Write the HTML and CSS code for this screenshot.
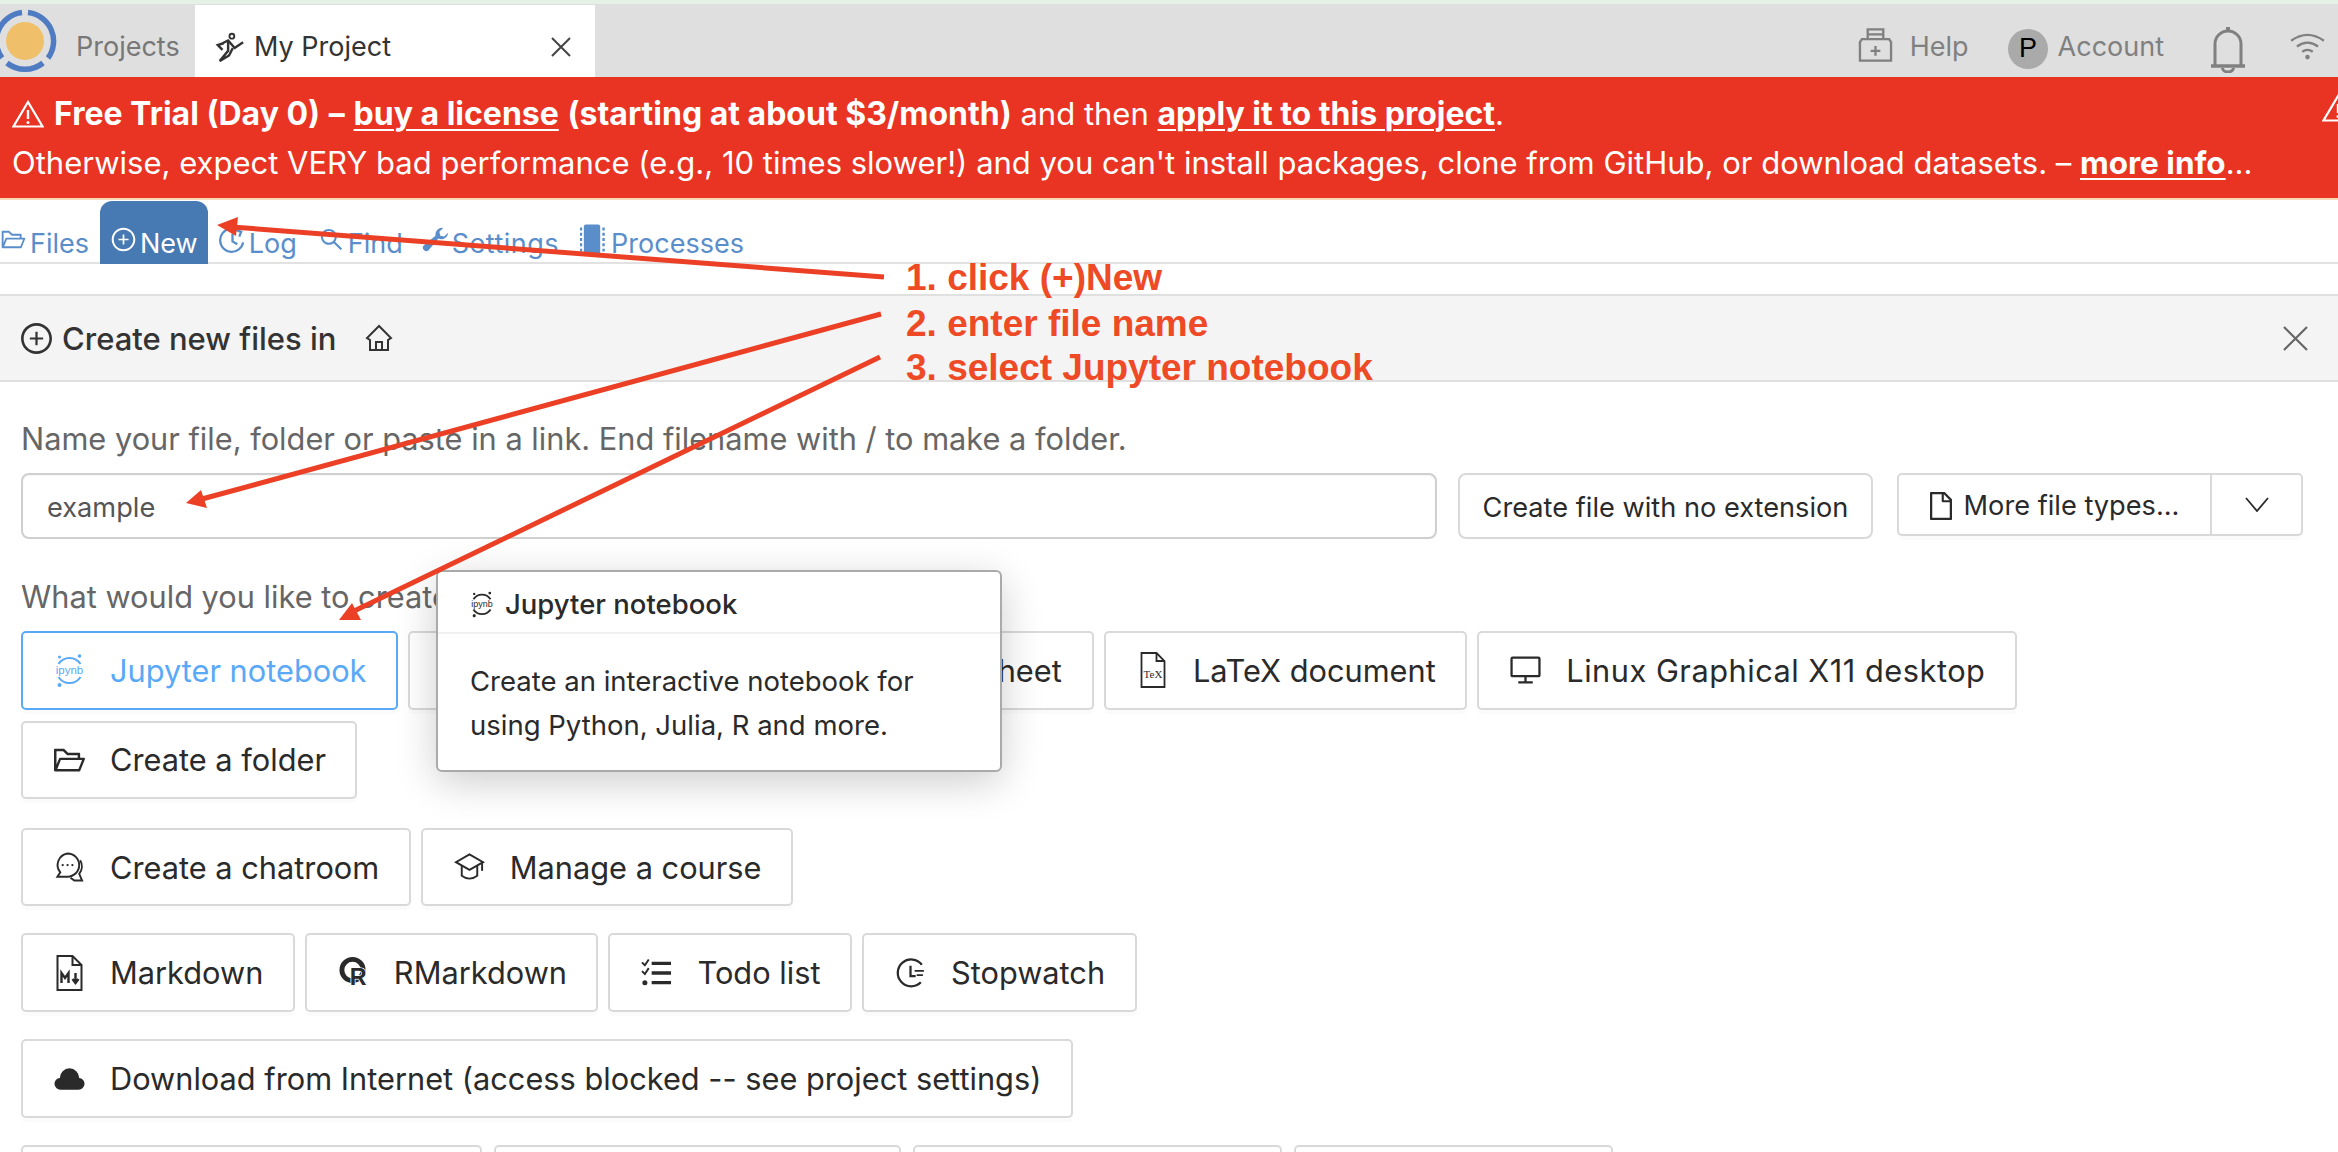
FILE: index.html
```html
<!DOCTYPE html>
<html lang="en">
<head>
<meta charset="utf-8">
<title>My Project</title>
<link rel="stylesheet" href="styles.css">
</head>
<body>
<div class="app">
  <div class="strip"></div>
  <header class="topbar">
    <svg class="logo" viewBox="0 0 64 64"><circle cx="32" cy="32" r="19" fill="#efc069"/><g fill="none" stroke="#4e7bc2" stroke-width="5.500"><path d="M35 3.600A28.600 28.600 0 0 1 55 49"/><path d="M50 54A28.600 28.600 0 0 1 14 54"/><path d="M9 49A28.600 28.600 0 0 1 29 3.600"/></g></svg>
    <span class="tab-projects">Projects</span>
    <div class="tab-active">
      <svg class="run" viewBox="0 0 32 32" fill="none" stroke="#333" stroke-width="2.600"><circle cx="18" cy="4.500" r="2.600" stroke-width="2"/><path d="M9 12l-6 2 5 5"/><path d="M8 12l6-3 7 8 9-6"/><path d="M14 9l0 11-9 11 10-6 4-8"/></svg>
      <span class="tab-title">My Project</span>
      <svg class="x tab-x" viewBox="0 0 20 20"><path d="M1 1l18 18M19 1L1 19"/></svg>
    </div>
    <div class="top-right">
      <svg class="medkit" viewBox="0 0 36 36" fill="none" stroke="#808080" stroke-width="2.400"><path d="M4 12h28l2 3v19H2V15z"/><path d="M10 12V2h16v10M10 7h16"/><path d="M18 19v10M13 24h10"/></svg>
      <span class="top-label help">Help</span>
      <span class="avatar">P</span>
      <span class="top-label account">Account</span>
      <svg class="bell" viewBox="0 0 36 48" fill="none" stroke="#808080" stroke-width="3"><path d="M5 40V19a13 13 0 0 1 26 0v21"/><path d="M1 41h34" stroke-width="3.600"/><path d="M18 2v4" stroke-width="4"/><path d="M12.500 43a5.500 4 0 0 0 11 0"/></svg>
      <svg class="wifi" viewBox="0 0 36 28" fill="none" stroke="#808080" stroke-width="2.400"><path d="M1 8q17-12 34 0"/><path d="M7 14q11-8 22 0"/><path d="M12.500 19.500q5.500-4 11 0"/><circle cx="18" cy="25" r="2.400" fill="#808080" stroke="none"/></svg>
    </div>
  </header>

  <section class="banner">
    <div class="banner-line banner-first"><svg class="warn" viewBox="0 0 32 28" fill="none" stroke="#fff" stroke-width="2.200"><path d="M16 2L1.500 26.500h29z"/><path d="M16 10v9" stroke-width="2.400"/><circle cx="16" cy="22.500" r="1.500" fill="#fff" stroke="none"/></svg><strong>Free Trial (Day 0)</strong> <strong>–</strong> <a class="link">buy a license</a> <strong>(starting at about $3/month)</strong> and then <a class="link">apply it to this project</a>.</div>
    <div class="banner-line">Otherwise, expect VERY bad performance (e.g., 10 times slower!) and you can't install packages, clone from GitHub, or download datasets. – <a class="link">more info</a>...</div>
    <svg class="warn warn-right" viewBox="0 0 32 28" fill="none" stroke="#fff" stroke-width="2.200"><path d="M16 2L1.500 26.500h29z"/><path d="M16 10v9" stroke-width="2.400"/><circle cx="16" cy="22.500" r="1.500" fill="#fff" stroke="none"/></svg>
  </section>

  <nav class="nav">
    <a class="nav-item"><svg class="ic nav-ic" viewBox="0 0 1024 1024"><path d="M928 444H820V330.400c0-17.700-14.300-32-32-32H473L355.700 186.200a8.150 8.150 0 00-5.500-2.200H96c-17.700 0-32 14.300-32 32v592c0 17.700 14.300 32 32 32h698c13 0 24.800-7.900 29.700-20l134-332c1.500-3.800 2.300-7.900 2.300-12 0-17.700-14.300-32-32-32zM136 256h188.500l119.600 114.400H748V444H238c-13 0-24.800 7.900-29.700 20L136 643.200V256zm635.300 512H159l103.300-256h612.400L771.300 768z"/></svg>Files</a>
    <a class="nav-item nav-active"><svg class="ic nav-ic" viewBox="0 0 1024 1024"><path d="M696 480H544V328c0-4.400-3.600-8-8-8h-48c-4.400 0-8 3.600-8 8v152H328c-4.400 0-8 3.600-8 8v48c0 4.400 3.600 8 8 8h152v152c0 4.400 3.600 8 8 8h48c4.400 0 8-3.600 8-8V544h152c4.400 0 8-3.600 8-8v-48c0-4.400-3.600-8-8-8z"/><path d="M512 64C264.600 64 64 264.600 64 512s200.600 448 448 448 448-200.600 448-448S759.400 64 512 64zm0 820c-205.400 0-372-166.600-372-372s166.600-372 372-372 372 166.600 372 372-166.600 372-372 372z"/></svg>New</a>
    <a class="nav-item"><svg class="nav-ic" viewBox="0 0 28 28" fill="none" stroke="#5a8ecb" stroke-width="2.400"><path d="M11 3A12 12 0 1 0 25 17"/><path d="M14 8v8l5 3"/><path d="M17 4l6 2-2 5"/></svg>Log</a>
    <a class="nav-item"><svg class="ic nav-ic" viewBox="0 0 1024 1024"><path d="M909.600 854.500L649.900 594.800C690.200 542.700 712 479 712 412c0-80.200-31.300-155.400-87.900-212.100-56.600-56.700-132-87.900-212.100-87.900s-155.500 31.300-212.100 87.900C143.200 256.500 112 331.800 112 412c0 80.100 31.300 155.500 87.900 212.100C256.500 680.800 331.800 712 412 712c67 0 130.600-21.800 182.700-62l259.700 259.600a8.200 8.200 0 0011.600 0l43.600-43.500a8.200 8.200 0 000-11.600zM570.400 570.400C528 612.700 471.800 636 412 636s-116-23.300-158.400-65.600C211.300 528 188 471.800 188 412s23.300-116.100 65.600-158.400C296 211.300 352.200 188 412 188s116.100 23.200 158.400 65.600S636 352.200 636 412s-23.300 116.100-65.600 158.400z"/></svg>Find</a>
    <a class="nav-item nav-settings"><svg class="nav-ic" viewBox="0 0 28 28" fill="#5a8ecb"><path d="M27 7a7 7 0 0 1-10 6L7 25a3.500 3.500 0 0 1-5-5l12-10a7 7 0 0 1 8-8l-4 4 1 4 4 1z"/></svg>Settings</a>
    <a class="nav-item"><svg class="nav-ic proc" viewBox="0 0 26 32"><rect x="4" y="0" width="17" height="32" rx="2" fill="#5a8ecb"/><path d="M1 3v26M24.500 3v26" stroke="#5a8ecb" stroke-width="2.500" stroke-dasharray="3 2.500" fill="none"/></svg>Processes</a>
  </nav>
  <div class="nav-spacer"></div>

  <div class="panel-head">
    <svg class="ic head-plus" viewBox="64 64 896 896"><path d="M696 480H544V328c0-4.400-3.600-8-8-8h-48c-4.400 0-8 3.600-8 8v152H328c-4.400 0-8 3.600-8 8v48c0 4.400 3.600 8 8 8h152v152c0 4.400 3.600 8 8 8h48c4.400 0 8-3.600 8-8V544h152c4.400 0 8-3.600 8-8v-48c0-4.400-3.600-8-8-8z"/><path d="M512 64C264.600 64 64 264.600 64 512s200.600 448 448 448 448-200.600 448-448S759.400 64 512 64zm0 820c-205.400 0-372-166.600-372-372s166.600-372 372-372 372 166.600 372 372-166.600 372-372 372z"/></svg>
    <span class="head-title">Create new files in</span>
    <svg class="home" viewBox="0 0 28 28" fill="none" stroke="#333" stroke-width="2"><path d="M14 2L2 14l3 2v10h18V16l3-2z"/><path d="M11 26v-8h6v8"/></svg>
    <svg class="x head-x" viewBox="0 0 25 25"><path d="M1 1l23 23M24 1L1 24"/></svg>
  </div>

  <main class="form">
    <div class="label">Name your file, folder or paste in a link. End filename with / to make a folder.</div>
    <div class="name-row">
      <input class="name-input" type="text" value="example">
      <button class="plain-btn">Create file with no extension</button>
      <div class="split">
        <button class="split-main"><svg class="ic more-ic" viewBox="160 64 704 896"><path d="M854.600 288.600L639.400 73.400c-6-6-14.100-9.400-22.600-9.400H192c-17.700 0-32 14.300-32 32v832c0 17.700 14.300 32 32 32h640c17.700 0 32-14.300 32-32V311.300c0-8.500-3.400-16.700-9.400-22.700zM790.200 326H602V137.800L790.200 326zm1.800 562H232V136h302v216a42 42 0 0042 42h216v494z"/></svg>More file types...</button>
        <button class="split-arrow"><svg class="chev" viewBox="0 0 24 15" fill="none" stroke="#2a2a2a" stroke-width="1.800"><path d="M1 1l11 13L23 1"/></svg></button>
      </div>
    </div>
    <div class="label label-what">What would you like to create?</div>

    <div class="group group-first">
      <button class="btn btn-active"><svg class="btn-ic" viewBox="0 0 30 36"><use href="#jup"/></svg>Jupyter notebook</button>
      <button class="btn btn-h1"><svg class="btn-ic" viewBox="0 0 30 30"><rect x="1" y="3" width="28" height="24" fill="none" stroke="#2a2a2a" stroke-width="2"/></svg>Linux terminal</button>
      <button class="btn btn-h2"><svg class="btn-ic" viewBox="0 0 30 30"><circle cx="15" cy="15" r="12" fill="none" stroke="#2a2a2a" stroke-width="2"/></svg>Sage worksheet</button>
      <button class="btn"><svg class="btn-ic" viewBox="0 0 30 36" fill="none" stroke="#2a2a2a" stroke-width="1.800"><path d="M4 1h15l8 8v26H4z"/><path d="M19 1v8h8"/><text class="tex" x="15.500" y="26" text-anchor="middle">TeX</text></svg>LaTeX document</button>
      <button class="btn btn-x11"><svg class="btn-ic" viewBox="0 0 30 30" fill="none" stroke="#2a2a2a" stroke-width="2.200"><rect x="1.500" y="3" width="27" height="18" rx="1"/><path d="M15 21v6M8 27h14"/></svg>Linux Graphical X11 desktop</button>
      <button class="btn"><svg class="ic btn-ic" viewBox="64 150 896 720"><path d="M928 444H820V330.400c0-17.700-14.300-32-32-32H473L355.700 186.200a8.150 8.150 0 00-5.500-2.200H96c-17.700 0-32 14.300-32 32v592c0 17.700 14.300 32 32 32h698c13 0 24.800-7.900 29.700-20l134-332c1.500-3.800 2.300-7.900 2.300-12 0-17.700-14.300-32-32-32zM136 256h188.500l119.600 114.400H748V444H238c-13 0-24.800 7.900-29.700 20L136 643.200V256zm635.300 512H159l103.300-256h612.400L771.300 768z"/></svg>Create a folder</button>
    </div>
    <div class="group group-second">
      <button class="btn"><svg class="btn-ic" viewBox="0 0 32 32" fill="none" stroke="#2a2a2a" stroke-width="2"><path d="M14 2A12 12 0 1 1 14 26H3.500l3-4.500A12 12 0 0 1 14 2z"/><path d="M27 9a12 12 0 0 1-1 14l3 7h-8l-4-3"/><circle cx="9" cy="14" r="1.200" fill="#2a2a2a" stroke="none"/><circle cx="14" cy="14" r="1.200" fill="#2a2a2a" stroke="none"/><circle cx="19" cy="14" r="1.200" fill="#2a2a2a" stroke="none"/></svg>Create a chatroom</button>
      <button class="btn"><svg class="btn-ic" viewBox="0 0 32 32" fill="none" stroke="#2a2a2a" stroke-width="2"><path d="M16 3L2 11l14 8 14-8z"/><path d="M8 15v10q8 6 16 0V15"/><path d="M29 12v8"/></svg>Manage a course</button>
    </div>
    <div class="group">
      <button class="btn"><svg class="btn-ic" viewBox="0 0 30 36" fill="none" stroke="#2a2a2a" stroke-width="2"><path d="M3 1h15l9 9v25H3z"/><path d="M18 1v9h9"/><path d="M7 28V18l3.500 5L14 18v10" stroke-width="2.400"/><path d="M21 18v10M18 24l3 4 3-4" stroke-width="2.400"/></svg>Markdown</button>
      <button class="btn"><svg class="btn-ic" viewBox="0 0 32 32"><circle cx="15" cy="13" r="11" fill="none" stroke="#2a2a2a" stroke-width="5"/><text class="r-mark" x="12" y="28">R</text></svg>RMarkdown</button>
      <button class="btn"><svg class="btn-ic" viewBox="0 0 32 32" fill="none" stroke="#2a2a2a"><path d="M11 6h20M11 16h20M11 26h20" stroke-width="3.400"/><path d="M1 5l3 3 4-6M1 14l3 3 4-6" stroke-width="2"/><circle cx="4" cy="26" r="2.600" fill="#2a2a2a" stroke="none"/></svg>Todo list</button>
      <button class="btn"><svg class="btn-ic" viewBox="0 0 30 30" fill="none" stroke="#2a2a2a" stroke-width="2.200"><path d="M26 7A13 13 0 1 0 25 24"/><path d="M15 8v10h5"/><path d="M19 13h9M21 17h6" stroke-width="1.800"/></svg>Stopwatch</button>
    </div>
    <div class="group">
      <button class="btn"><svg class="btn-ic" viewBox="0 0 32 26"><path d="M7 25a6 6 0 0 1-1-12 10 10 0 0 1 20 0 6 6 0 0 1-1 12z" fill="#2a2a2a"/></svg>Download from Internet (access blocked -- see project settings)</button>
    </div>
    <div class="group group-last">
      <button class="btn btn-b1"></button>
      <button class="btn btn-b2"></button>
      <button class="btn btn-b3"></button>
      <button class="btn btn-b4"></button>
    </div>
  </main>

  <div class="popover">
    <div class="pop-title"><svg class="pop-ic" viewBox="0 0 30 36"><use href="#jup-dark"/></svg>Jupyter notebook</div>
    <div class="pop-body">Create an interactive notebook for using Python, Julia, R and more.</div>
  </div>

  <svg class="arrows" viewBox="0 0 2338 1152">
    <defs>
      <g id="jup"><path d="M4 12A13 13 0 0 1 26 12" fill="none" stroke="#5aa9f7" stroke-width="2"/><path d="M4 25A13 13 0 0 0 26 25" fill="none" stroke="#5aa9f7" stroke-width="2"/><circle cx="5" cy="5" r="1.500" fill="#5aa9f7"/><circle cx="25" cy="4" r="1.800" fill="#5aa9f7"/><circle cx="5" cy="33" r="2" fill="#5aa9f7"/><text class="jup-text" x="15" y="22" text-anchor="middle" fill="#5aa9f7">ipynb</text></g>
      <g id="jup-dark"><path d="M4 12A13 13 0 0 1 26 12" fill="none" stroke="#2a2a2a" stroke-width="2.400"/><path d="M4 25A13 13 0 0 0 26 25" fill="none" stroke="#2a2a2a" stroke-width="2.400"/><circle cx="5" cy="5" r="1.500" fill="#2a2a2a"/><circle cx="25" cy="4" r="1.800" fill="#2a2a2a"/><circle cx="5" cy="33" r="2" fill="#2a2a2a"/><text class="jup-text" x="15" y="22" text-anchor="middle" fill="#2a2a2a">ipynb</text></g>
    </defs>
    <g stroke="#eb4025" stroke-width="5" fill="none">
      <path d="M884 277L232 227"/><path d="M881 314L202 499"/><path d="M880 357L352 612"/>
    </g>
    <g fill="#eb4025">
      <path d="M217 225L238 217L236 236z"/><path d="M186 503L201 490L207 508z"/><path d="M339 620L352 603L361 620z"/>
    </g>
  </svg>
  <div class="note note-1">1. click (+)New</div>
  <div class="note note-2">2. enter file name</div>
  <div class="note note-3">3. select Jupyter notebook</div>
</div>
</body>
</html>
```
FILE: styles.css
```css
* { box-sizing: border-box; }
html, body { margin: 0; padding: 0; height: 100%; overflow: hidden; background: #fff; }
body { font-family: Inter, "Noto Sans", sans-serif; color: #2a2a2a; font-size: 27px; }
.app { position: relative; width: 2338px; height: 1152px; overflow: hidden; display: flex; flex-direction: column; }
.strip { height: 4px; background: #e5f0e7; flex: none; }

.topbar { height: 73px; flex: none; background: #dfdfdf; display: flex; align-items: stretch; }
.logo { width: 64px; height: 64px; margin: 5px 0 0 -7px; flex: none; }
.tab-projects { color: #777; margin-left: 19px; width: 119px; padding-top: 12px; display: flex; align-items: center; flex: none; }
.tab-active { width: 400px; margin-top: 1px; background: #fff; display: flex; align-items: center; flex: none; position: relative; color: #333; padding: 11px 0 0 20px; }
.run { width: 30px; height: 30px; flex: none; }
.tab-title { margin-left: 9px; }
.x { fill: none; stroke: #444; stroke-width: 2; }
.tab-x { width: 20px; height: 20px; margin-left: auto; margin-right: 24px; }
.top-right { margin-left: auto; display: flex; align-items: center; color: #808080; margin-right: 13px; padding-top: 12px; }
.medkit { width: 35px; height: 36px; flex: none; margin-top: -4px; }
.help { margin-left: 17px; }
.avatar { width: 40px; height: 40px; border-radius: 50%; background: #aaa; color: #000; display: flex; align-items: center; justify-content: center; margin: 4px 0 0 39.500px; flex: none; font-family: "Liberation Sans", sans-serif; }
.account { margin-left: 9.500px; }
.bell { width: 36px; height: 48px; margin: 5px 0 0 46px; flex: none; }
.wifi { width: 35px; height: 27px; margin: -1px 0 0 44px; flex: none; }

.banner { height: 123px; flex: none; background: #e93323; color: #fff; border-bottom: 2px solid #f9d9b5; padding: 0 0 0 12px; position: relative; font-size: 31px; }
.banner-line { height: 49px; line-height: 49px; white-space: nowrap; }
.banner-first { margin-top: 12px; }
.banner-first strong, .banner-first .link { font-size: 32px; }
.warn { width: 32px; height: 28px; vertical-align: -3px; margin-right: 10px; }
.warn-right { position: absolute; right: -16px; top: 17px; margin: 0; }
.banner strong { font-weight: 700; }
.link { color: #fff; font-weight: 700; font-size: 31.500px; text-decoration: underline; text-underline-offset: 4px; text-decoration-thickness: 2px; }

.nav { height: 64px; flex: none; display: flex; align-items: flex-end; gap: 1px; margin-left: -10px; border-bottom: 2px solid #e2e2e2; width: 2348px; }
.nav-item { height: 63px; margin-bottom: -2px; padding: 0 10px 2px; display: flex; align-items: flex-end; color: #5a8ecb; line-height: 36px; border-radius: 12px 12px 0 0; }
.nav-ic { width: 27px; height: 27px; margin: 0 3px 9px 0; flex: none; }
.ic { fill: currentColor; }
.nav-active { background: #4779b3; color: #fff; }
.nav-settings { letter-spacing: .5px; margin-left: -2px; }
.proc { height: 32px; width: 25px; margin-right: 6px; margin-bottom: 6px; }
.nav-spacer { height: 30px; flex: none; }

.panel-head { height: 88px; flex: none; background: #f4f4f4; border-top: 2px solid #e0e0e0; border-bottom: 2px solid #e0e0e0; display: flex; align-items: center; padding: 0 30px 0 21px; color: #333; }
.head-plus { width: 31px; height: 31px; flex: none; }
.head-title { margin-left: 10px; font-weight: 500; font-size: 31px; }
.home { width: 28px; height: 28px; margin-left: 29px; flex: none; }
.head-x { width: 25px; height: 25px; margin-left: auto; stroke: #666; stroke-width: 2.200; }

.form { padding: 0 21px; flex: none; font-size: 30.750px; }
.label { color: #666; line-height: 44px; }
.form > .label:first-child { margin-top: 35px; }
.name-row { display: flex; align-items: flex-start; margin-top: 12px; font-size: 27.200px; }
.name-input { width: 1416px; height: 66px; border: 2px solid #cfcfcf; border-radius: 8px; padding: 2px 24px 0; font: inherit; color: #555; background: #fff; outline: none; flex: none; box-shadow: inset 0 1px 2px rgba(0,0,0,.04); }
.plain-btn { margin-left: 21px; width: 415px; height: 66px; border: 2px solid #d9d9d9; border-radius: 8px; background: #fff; font: inherit; color: #2a2a2a; padding: 2px 0 0; flex: none; }
.split { margin-left: 24px; width: 406px; height: 63px; display: flex; border: 2px solid #d9d9d9; border-radius: 5px; box-shadow: 0 4px 0 rgba(0,0,0,.015); flex: none; }
.split-main { flex: 1; border: 0; background: none; border-right: 2px solid #d9d9d9; font: inherit; color: #2a2a2a; display: flex; align-items: center; justify-content: center; padding: 2px 0 0; }
.more-ic { width: 22px; height: 28px; margin-right: 12px; }
.split-arrow { width: 89px; border: 0; background: none; display: flex; align-items: center; justify-content: center; padding: 0; }
.chev { width: 24px; height: 15px; }
.label-what { margin-top: 36px; }

.group { display: flex; flex-wrap: wrap; gap: 11px 10px; margin-top: 27px; }
.group-first { margin-top: 0; padding-top: 12px; }
.group-second { margin-top: 28.500px; }
.group-last { gap: 12px; }
.btn { height: 78.670px; display: flex; align-items: center; border: 2px solid #d9d9d9; border-radius: 5px; background: #fff; font: inherit; color: #2a2a2a; padding: 0 29.500px 0 31px; box-shadow: 0 4px 0 rgba(0,0,0,.015); white-space: nowrap; }
.btn-ic { width: 31px; height: 36px; margin-right: 25px; flex: none; }
.btn-active { border-color: #5aa9f7; color: #5aa9f7; }
.btn-x11 { letter-spacing: .5px; }
.btn-h1 { width: 330px; }
.btn-h2 { width: 346px; padding: 0 41px 0 21px; }
.btn-b1 { width: 461px; }
.btn-b2 { width: 407px; }
.btn-b3 { width: 369px; }
.btn-b4 { width: 319px; }
.tex { font: 11px "Liberation Serif", serif; fill: #2a2a2a; stroke: none; }
.r-mark { font: bold 24px "Liberation Sans", sans-serif; fill: #2a2a2a; stroke: #fff; stroke-width: 1.500px; paint-order: stroke; }
.jup-text { font: 11.500px "Liberation Sans", sans-serif; }

.popover { position: absolute; left: 436px; top: 570px; width: 566px; height: 202px; background: #fff; border: 2px solid #aaa; border-radius: 6px; box-shadow: 0 10px 40px rgba(0,0,0,.2); font-size: 27.500px; }
.pop-title { height: 62px; border-bottom: 2px solid #f0f0f0; display: flex; align-items: center; padding: 3px 0 0 32px; font-weight: 500; }
.pop-ic { width: 24px; height: 28px; margin-right: 11px; flex: none; }
.pop-body { padding: 25px 32px 0; line-height: 44px; }

.arrows { position: absolute; left: 0; top: 0; width: 2338px; height: 1152px; pointer-events: none; }
.note { position: absolute; left: 906px; color: #ee4a26; font: bold 37px/40px "Liberation Sans", sans-serif; white-space: nowrap; }
.note-1 { top: 257.500px; }
.note-2 { top: 303.500px; }
.note-3 { top: 347.500px; }
```
